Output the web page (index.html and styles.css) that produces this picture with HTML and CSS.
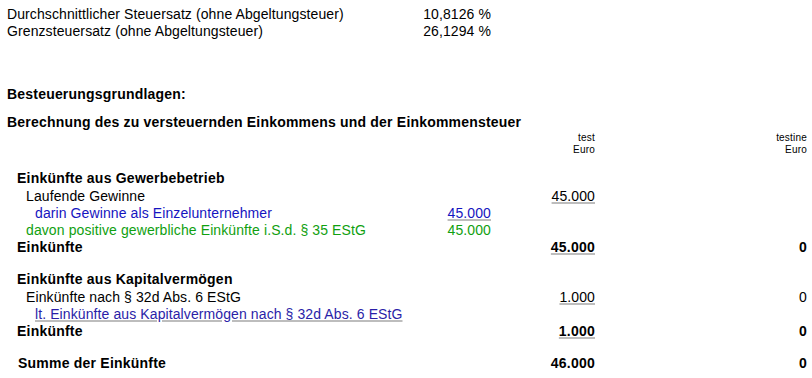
FILE: index.html
```html
<!DOCTYPE html>
<html lang="de">
<head>
<meta charset="utf-8">
<title>Besteuerungsgrundlagen</title>
<link rel="stylesheet" href="styles.css">
</head>
<body>
<div class="page">
  <div class="row"><span class="label">Durchschnittlicher Steuersatz (ohne Abgeltungsteuer)</span><span class="num">10,8126 %</span><span></span><span></span></div>
  <div class="row"><span class="label">Grenzsteuersatz (ohne Abgeltungsteuer)</span><span class="num">26,1294 %</span><span></span><span></span></div>

  <div class="title t1">Besteuerungsgrundlagen:</div>
  <div class="title t2">Berechnung des zu versteuernden Einkommens und der Einkommensteuer</div>

  <div class="colhead"><span></span><span></span><span class="num">test<br>Euro</span><span class="num">testine<br>Euro</span></div>

  <div class="section s1">
    <div class="row head"><span class="label ind1 bold">Einkünfte aus Gewerbebetrieb</span><span></span><span></span><span></span></div>
    <div class="row"><span class="label ind2">Laufende Gewinne</span><span></span><span class="num"><span class="ul">45.000</span></span><span></span></div>
    <div class="row blue"><span class="label ind3">darin Gewinne als Einzelunternehmer</span><span class="num"><span class="ul">45.000</span></span><span></span><span></span></div>
    <div class="row green"><span class="label ind2">davon positive gewerbliche Einkünfte i.S.d. § 35 EStG</span><span class="num">45.000</span><span></span><span></span></div>
    <div class="row bold"><span class="label ind1">Einkünfte</span><span></span><span class="num"><span class="ul">45.000</span></span><span class="num">0</span></div>
  </div>

  <div class="section s2">
    <div class="row head"><span class="label ind1 bold">Einkünfte aus Kapitalvermögen</span><span></span><span></span><span></span></div>
    <div class="row"><span class="label ind2">Einkünfte nach § 32d Abs. 6 EStG</span><span></span><span class="num"><span class="ul">1.000</span></span><span class="num">0</span></div>
    <div class="row link"><span class="label ind3"><span class="ul">lt. Einkünfte aus Kapitalvermögen nach § 32d Abs. 6 EStG</span></span><span></span><span></span><span></span></div>
    <div class="row bold"><span class="label ind1">Einkünfte</span><span></span><span class="num"><span class="ul">1.000</span></span><span class="num">0</span></div>
  </div>

  <div class="section s3">
    <div class="row bold"><span class="label ind1b">Summe der Einkünfte</span><span></span><span class="num">46.000</span><span class="num">0</span></div>
  </div>
</div>
</body>
</html>
```
FILE: styles.css
```css
html, body {
  margin: 0;
  padding: 0;
  background: #ffffff;
}

body {
  font-family: "Liberation Sans", Arial, sans-serif;
  font-size: 14px;
  letter-spacing: 0.1px;
  color: #000000;
}

.page {
  width: 812px;
  box-sizing: border-box;
  padding: 6px 5px 0 7px;
}

.row,
.colhead {
  display: grid;
  grid-template-columns: minmax(0, 1fr) 100px 104px 212px;
}

.row {
  height: 17px;
  line-height: 17px;
  white-space: nowrap;
}

.label {
  white-space: nowrap;
  overflow: visible;
}

.num {
  text-align: right;
  white-space: nowrap;
}

.title {
  font-weight: bold;
  letter-spacing: 0.2px;
  height: 17px;
  line-height: 17px;
  white-space: nowrap;
}

.t1 { margin-top: 46px; }
.t2 { margin-top: 11px; }

.colhead {
  margin-top: 1px;
  font-size: 10px;
  letter-spacing: 0.2px;
  line-height: 11.5px;
  height: 23px;
}

.section.s1 { margin-top: 15px; }
.section.s2 { margin-top: 15px; }
.section.s3 { margin-top: 15px; }

.row.head { margin-bottom: 1px; }

.bold {
  font-weight: bold;
  letter-spacing: 0.22px;
}

.ind1 { padding-left: 10px; }
.ind1b { padding-left: 11px; }
.ind2 { padding-left: 19px; }
.ind3 { padding-left: 28px; }

.blue { color: #1515c0; }
.green { color: #10a010; }
.link { color: #2a1ea8; }

.ul {
  text-decoration: underline;
  text-decoration-color: #bdbdbd;
  text-decoration-thickness: 2px;
  text-underline-offset: 1px;
}
```
